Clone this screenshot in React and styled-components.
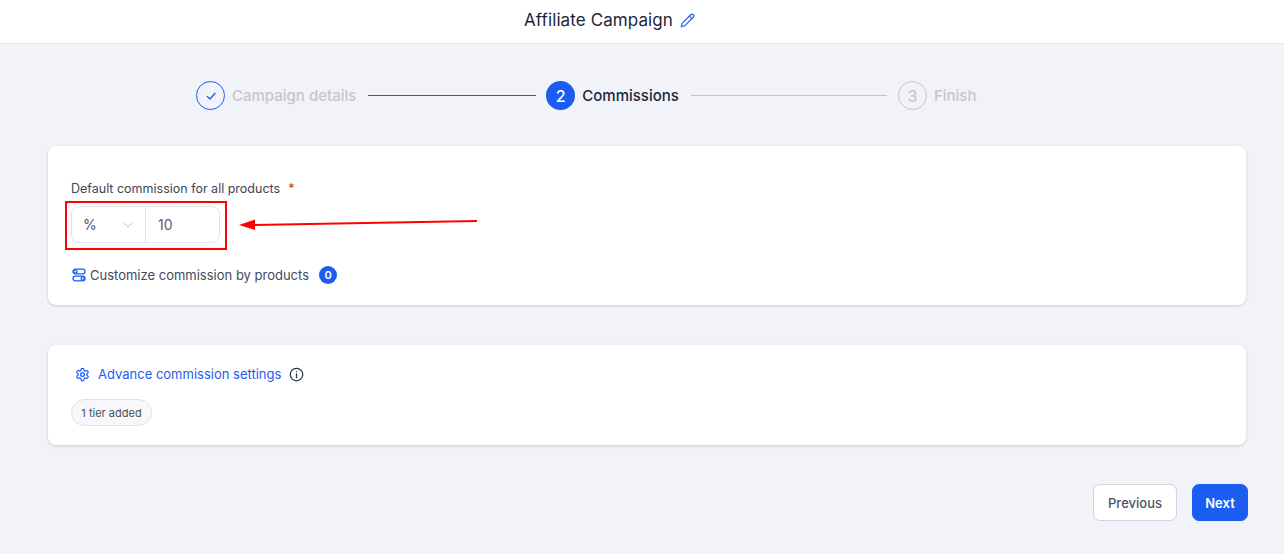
import React from "react";
import styled, { createGlobalStyle } from "styled-components";

const Global = createGlobalStyle`
  html, body { margin: 0; padding: 0; background: #f1f3f8; }
  body { font-family: Inter, "Noto Sans", sans-serif; color: #344054; }
  * { box-sizing: border-box; }
`;
const Page = styled.div`
  width: 1284px; height: 554px; overflow: hidden; background: #f1f3f8; position: relative;
`;
const Header = styled.header`
  height: 44px; background: #fff; border-bottom: 1px solid #e8e9ef;
  display: flex; align-items: center; padding: 0 0 3px 524px; gap: 7px;
`;
const Title = styled.h1`
  margin: 0; font-size: 17px; line-height: 24px; font-weight: 400; color: #1d2639; letter-spacing: 0.1px;
`;
const Stepper = styled.div`
  display: flex; align-items: center; height: 29px; margin: 37px 0 36px; padding-left: 196px;
`;
const Circle = styled.div`
  width: 29px; height: 29px; border-radius: 50%; flex: none;
  display: flex; align-items: center; justify-content: center;
  font-size: 16px; font-weight: 500;
  ${p => p.$state === "done" && "border: 1px solid #1a5df0; color: #1a5df0;"}
  ${p => p.$state === "active" && "background: #1a5df0; color: #fff;"}
  ${p => p.$state === "todo" && "border: 1px solid #c6c6c9; color: #c6c6c9;"}
`;
const StepLabel = styled.span`
  margin-left: 7px; font-size: 15px; line-height: 20px; font-weight: 500;
  color: ${p => (p.$active ? "#1d2639" : "#c6c6c9")};
`;
const Line = styled.div`
  height: 1px; flex: none; margin: 0 ${p => p.$after}px 0 12px; width: ${p => p.$w}px;
  background: ${p => p.$color};
`;
const Card = styled.section`
  margin: 0 38px 0 48px; width: 1198px; background: #fff; border-radius: 8px;
  box-shadow: 0 1px 3px rgba(40, 50, 80, 0.2);
  padding: ${p => p.$pad};
  height: ${p => p.$h}px;
`;
const Spaced = styled.div`margin-top: 40px;`;
const FieldLabel = styled.div`
  font-size: 12.5px; line-height: 16px; color: #3d4658; display: flex; gap: 8px;
`;
const Required = styled.span`color: #d92d20;`;
const InputGroup = styled.div`
  margin-top: 9px; width: 149px; height: 37px; display: flex;
  border: 1px solid #e3e4e8; border-radius: 8px; background: #fff;
  position: relative;
`;
const Select = styled.div`
  width: 74px; flex: none; border-right: 1px solid #e3e4e8;
  display: flex; align-items: center; justify-content: space-between;
  padding: 0 11px; font-size: 14px; color: #4b5361;
`;
const NumberValue = styled.div`
  padding-left: 12px; display: flex; align-items: center; font-size: 14px; color: #5b6270;
`;
const Highlight = styled.div`
  position: absolute; left: -7px; top: -6px; width: 162px; height: 49px;
  border: 2px solid #f00; pointer-events: none;
`;
const Arrow = styled.svg`
  position: absolute; left: 238px; top: 214px;
`;
const CustomizeRow = styled.div`
  margin-top: 23px; display: flex; align-items: center; height: 18px;
  font-size: 13px; color: #3f4a5c;
`;
const Badge = styled.span`
  width: 18px; height: 18px; border-radius: 50%; background: #1a5df0; color: #fff;
  margin-left: 10px; font-size: 11px; font-weight: 600;
  display: flex; align-items: center; justify-content: center;
`;
const IconSlot = styled.span`
  display: inline-flex; margin: ${p => p.$m || "0"};
`;
const AdvRow = styled.div`
  display: flex; align-items: center; height: 18px; padding-left: 4px;
`;
const AdvLink = styled.span`
  margin-left: 8px; font-size: 13px; color: #1f5af0;
`;
const Chip = styled.div`
  margin-top: 16px; width: 81px; height: 27px; border-radius: 14px;
  border: 1px solid #e1e2e7; background: #f8f8fb;
  display: flex; align-items: center; justify-content: center;
  font-size: 11px; color: #4a4f5c;
`;
const Actions = styled.div`
  margin-top: 39px; padding-right: 36px; display: flex; justify-content: flex-end; gap: 15px;
`;
const Button = styled.button`
  height: 37px; border-radius: 7px; font-family: inherit; font-size: 13px; padding: 0;
  width: ${p => p.$w}px;
  ${p => p.$primary
    ? "background:#1a5df0;color:#fff;border:1px solid #1a5df0;font-weight:600;"
    : "background:#fff;color:#4a5568;border:1px solid #d0d3da;font-weight:500;"}
`;

const Pencil = () => (
  <svg width="15" height="15" viewBox="0 0 24 24" fill="none" stroke="#2468f2" strokeWidth="2" strokeLinecap="round" strokeLinejoin="round">
    <path d="M21.2 6.8a2.8 2.8 0 0 0-4-4L3.8 16.2a2 2 0 0 0-.5.8L2 22l5-1.3a2 2 0 0 0 .8-.5z" />
    <path d="m15 5 4 4" />
  </svg>
);
const Check = () => (
  <svg width="12" height="12" viewBox="0 0 24 24" fill="none" stroke="#1a5df0" strokeWidth="2.6" strokeLinecap="round" strokeLinejoin="round">
    <path d="M4.5 13 10 18 20 6.5" />
  </svg>
);
const Chevron = () => (
  <svg width="12" height="12" viewBox="0 0 24 24" fill="none" stroke="#c2c4ca" strokeWidth="2" strokeLinecap="round" strokeLinejoin="round">
    <path d="m4 8 8 8 8-8" />
  </svg>
);
const Toggles = () => (
  <svg width="14" height="14" viewBox="0 0 14 14" fill="none" stroke="#1a5df0" strokeWidth="1.3">
    <rect x="1" y="1.2" width="12" height="4.6" rx="2.3" />
    <circle cx="3.3" cy="3.5" r="1.6" />
    <rect x="1" y="8.2" width="12" height="4.6" rx="2.3" />
    <circle cx="10.7" cy="10.5" r="1.6" />
  </svg>
);
const Gear = () => (
  <svg width="15" height="15" viewBox="0 0 24 24" fill="none" stroke="#1a5df0" strokeWidth="2" strokeLinecap="round" strokeLinejoin="round">
    <path d="M12.22 2h-.44a2 2 0 0 0-2 2v.18a2 2 0 0 1-1 1.73l-.43.25a2 2 0 0 1-2 0l-.15-.08a2 2 0 0 0-2.73.73l-.22.38a2 2 0 0 0 .73 2.73l.15.1a2 2 0 0 1 1 1.72v.51a2 2 0 0 1-1 1.74l-.15.09a2 2 0 0 0-.73 2.73l.22.38a2 2 0 0 0 2.73.73l.15-.08a2 2 0 0 1 2 0l.43.25a2 2 0 0 1 1 1.73V20a2 2 0 0 0 2 2h.44a2 2 0 0 0 2-2v-.18a2 2 0 0 1 1-1.73l.43-.25a2 2 0 0 1 2 0l.15.08a2 2 0 0 0 2.73-.73l.22-.39a2 2 0 0 0-.73-2.73l-.15-.08a2 2 0 0 1-1-1.74v-.5a2 2 0 0 1 1-1.74l.15-.09a2 2 0 0 0 .73-2.73l-.22-.38a2 2 0 0 0-2.73-.73l-.15.08a2 2 0 0 1-2 0l-.43-.25a2 2 0 0 1-1-1.73V4a2 2 0 0 0-2-2z" />
    <circle cx="12" cy="12" r="3" />
  </svg>
);
const Info = () => (
  <svg width="15" height="15" viewBox="0 0 24 24" fill="none" stroke="#2b3444" strokeWidth="2" strokeLinecap="round">
    <circle cx="12" cy="12" r="10" />
    <path d="M12 11v6M12 7.5v.01" />
  </svg>
);

export default function App() {
  return (
    <Page>
      <Global />
      <Header>
        <Title>Affiliate Campaign</Title>
        <Pencil />
      </Header>
      <Stepper>
        <Circle $state="done"><Check /></Circle>
        <StepLabel>Campaign details</StepLabel>
        <Line $w={168} $after={10} $color="#2a5bc8" />
        <Circle $state="active">2</Circle>
        <StepLabel $active>Commissions</StepLabel>
        <Line $w={196} $after={11} $color="#c2c3c9" />
        <Circle $state="todo">3</Circle>
        <StepLabel>Finish</StepLabel>
      </Stepper>
      <Card $pad="35px 24px 0 23px" $h={159}>
        <FieldLabel>Default commission for all products <Required>*</Required></FieldLabel>
        <InputGroup>
          <Select>% <Chevron /></Select>
          <NumberValue>10</NumberValue>
          <Highlight />
        </InputGroup>
        <CustomizeRow>
          <IconSlot $m="0 4px 0 1px"><Toggles /></IconSlot>
          Customize commission by products
          <Badge>0</Badge>
        </CustomizeRow>
      </Card>
      <Spaced>
        <Card $pad="20px 24px 0 23px" $h={100}>
          <AdvRow>
            <Gear />
            <AdvLink>Advance commission settings</AdvLink>
            <IconSlot $m="0 0 0 8px"><Info /></IconSlot>
          </AdvRow>
          <Chip>1 tier added</Chip>
        </Card>
      </Spaced>
      <Actions>
        <Button $w={84}>Previous</Button>
        <Button $w={56} $primary>Next</Button>
      </Actions>
      <Arrow width="242" height="20" viewBox="0 0 242 20">
        <path d="M239 7 L16 11" stroke="#f00" strokeWidth="2" fill="none" />
        <path d="M1 11 L17 5.5 L17 16 Z" fill="#f00" />
      </Arrow>
    </Page>
  );
}
